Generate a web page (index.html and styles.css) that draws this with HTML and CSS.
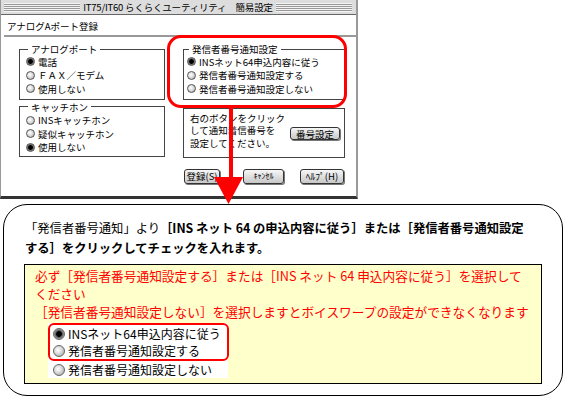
FILE: index.html
```html
<!DOCTYPE html>
<html lang="ja">
<head>
    <meta charset="UTF-8">
    <title>アナログAポート登録</title>
    <link rel="stylesheet" href="styles.css">
</head>
<body>
    <div class="page">
        <div class="window">
            <div class="titlebar">
                <span class="stripes"></span>
                <span class="title">IT75/IT60 らくらくユーティリティ　簡易設定</span>
                <span class="stripes"></span>
            </div>
            <div class="win-body">
                <div class="page-title">アナログAポート登録</div>
                <div class="columns">
                    <div class="col col-left">
                        <fieldset class="group">
                            <legend>アナログポート</legend>
                            <div class="opt"><span class="rb on"></span>電話</div>
                            <div class="opt"><span class="rb"></span>ＦＡＸ／モデム</div>
                            <div class="opt"><span class="rb"></span>使用しない</div>
                        </fieldset>
                        <fieldset class="group group-catch">
                            <legend>キャッチホン</legend>
                            <div class="opt"><span class="rb"></span>INSキャッチホン</div>
                            <div class="opt"><span class="rb"></span>疑似キャッチホン</div>
                            <div class="opt"><span class="rb on"></span>使用しない</div>
                        </fieldset>
                    </div>
                    <div class="col col-right">
                        <fieldset class="group group-notify">
                            <legend>発信者番号通知設定</legend>
                            <div class="opt"><span class="rb on"></span>INSネット64申込内容に従う</div>
                            <div class="opt"><span class="rb"></span>発信者番号通知設定する</div>
                            <div class="opt"><span class="rb"></span>発信者番号通知設定しない</div>
                        </fieldset>
                        <div class="number-box">
                            <p>右のボタンをクリック<br>して通知着信番号を<br>設定してください。</p>
                            <button class="btn btn-number">番号設定</button>
                        </div>
                    </div>
                </div>
                <div class="actions">
                    <button class="btn btn-save">登録(S)</button>
                    <button class="btn btn-cancel">ｷｬﾝｾﾙ</button>
                    <button class="btn btn-help">ﾍﾙﾌﾟ(H)</button>
                </div>
            </div>
        </div>

        <!-- annotation: red frame + arrow over the dialog -->
        <div class="highlight"></div>
        <svg class="arrow" width="40" height="100" viewBox="0 0 40 100">
            <rect x="19" y="0" width="4" height="72" fill="#ff0000"/>
            <polygon points="4,71 33,71 18.5,98" fill="#ff0000"/>
        </svg>

        <div class="callout">
            <p class="lead">「発信者番号通知」より<b>［INS ネット 64 の申込内容に従う］または［発信者番号通知設定<br>する］をクリックしてチェックを入れます。</b></p>
            <div class="note">
                <p class="warn">必ず［発信者番号通知設定する］または［INS ネット 64 申込内容に従う］を選択して<br>ください<br>［発信者番号通知設定しない］を選択しますとボイスワープの設定ができなくなります</p>
                <div class="choices">
                    <div class="marked">
                        <div class="choice"><span class="radio on"></span>INSネット64申込内容に従う</div>
                        <div class="choice"><span class="radio"></span>発信者番号通知設定する</div>
                    </div>
                    <div class="choice"><span class="radio"></span>発信者番号通知設定しない</div>
                </div>
            </div>
        </div>
    </div>
</body>
</html>
```

FILE: styles.css
```css
body {
    margin: 0;
    background: white;
    font-family: "Noto Sans CJK JP", sans-serif;
    color: #000;
}
.page {
    position: relative;
    width: 565px;
    height: 397px;
}
p {
    margin: 0;
}

/* dialog window */
.window {
    width: 358px;
    height: 199px;
    box-sizing: border-box;
    border-left: 1px solid #999;
    border-right: 2px solid #999;
    border-bottom: 3px solid #333;
    background: white;
    display: flex;
    flex-direction: column;
    font-size: 9.5px;
}
.titlebar {
    height: 15px;
    box-sizing: border-box;
    background: #ddd;
    border-bottom: 1px solid #666;
    display: flex;
    align-items: center;
    padding: 0 4px 0 3px;
    gap: 3px;
}
.stripes {
    flex: 1;
    height: 9px;
    background: repeating-linear-gradient(to bottom, #f4f4f4 0 1px, #999 1px 2px);
}
.title {
    font-size: 9.5px;
    line-height: 14px;
    letter-spacing: -0.2px;
}
.win-body {
    flex: 1;
    display: flex;
    flex-direction: column;
}
.page-title {
    margin-left: 3px;
    padding: 3px 0 0 3px;
    line-height: 17px;
    border-bottom: 2px solid #999;
}
.columns {
    display: flex;
    gap: 18px;
    margin: 6px 0 0 18px;
}
.col {
    display: flex;
    flex-direction: column;
}
.col-left {
    width: 146px;
    gap: 1px;
}
.col-right {
    width: 162px;
}
.group {
    margin: 0;
    min-width: 0;
    border: 1px solid #444;
    padding: 0 4px 3px 6px;
}
.group legend {
    padding: 0 3px;
    margin-left: 2px;
    line-height: 12px;
}
.group-catch {
    padding-top: 1px;
    padding-bottom: 2px;
}
.group-notify {
    padding-left: 3px;
}
.opt {
    display: flex;
    align-items: center;
    gap: 3px;
    height: 13.5px;
    white-space: nowrap;
}
.rb {
    width: 9px;
    height: 9px;
    box-sizing: border-box;
    border-radius: 50%;
    border: 1px solid #555;
    background: radial-gradient(circle at 40% 40%, #fff 0, #ddd 45%, #999 100%);
}
.rb.on {
    background: radial-gradient(circle, #000 0 2px, #555 2.5px, #aaa 4px);
}
.number-box {
    margin-top: 8px;
    height: 50px;
    box-sizing: border-box;
    border: 1px solid #444;
    display: flex;
    justify-content: space-between;
    align-items: flex-start;
    padding: 3px 4px 0 6px;
    line-height: 12.5px;
}
.btn {
    font-family: inherit;
    font-size: 9.5px;
    line-height: 12px;
    padding: 0;
    color: #000;
    border: 1px solid #333;
    border-radius: 3px;
    background: linear-gradient(#f6f6f6, #c8c8c8);
    box-shadow: 1px 1px 0 #777;
}
.btn-number {
    align-self: center;
    margin-top: -1px;
    width: 50px;
    height: 13px;
}
.actions {
    display: flex;
    justify-content: flex-end;
    margin-top: 11px;
    padding-right: 12px;
}
.actions .btn {
    height: 15px;
}
.btn-save {
    width: 36px;
    margin-right: 23px;
}
.btn-cancel {
    width: 41px;
    margin-right: 16px;
    font-size: 8px;
}
.btn-help {
    width: 44px;
}

/* red annotation */
.highlight {
    position: absolute;
    left: 167px;
    top: 35px;
    width: 180px;
    height: 73px;
    box-sizing: border-box;
    border: 3px solid #ff0000;
    border-radius: 14px;
}
.arrow {
    position: absolute;
    left: 210px;
    top: 106px;
}

/* explanation bubble */
.callout {
    margin: 5px 0 0 3px;
    width: 560px;
    height: 192px;
    box-sizing: border-box;
    border: 1px solid #000;
    border-radius: 24px;
    padding: 13px 21px 0 21px;
}
.lead {
    font-size: 12.3px;
    line-height: 20px;
    white-space: nowrap;
}
.note {
    margin: 6px 0 0 -1px;
    width: 518px;
    box-sizing: border-box;
    border: 1px solid #000;
    background: #ffffcc;
    padding: 2px 10px 5px 10px;
}
.warn {
    color: #ff0000;
    font-size: 12.7px;
    line-height: 18px;
    white-space: nowrap;
}
.choices {
    margin: 2px 0 0 13px;
    width: 180px;
    background: white;
    font-size: 12px;
}
.marked {
    border: 2px solid #ff0000;
    border-radius: 6px;
    margin-right: -1px;
}
.choice {
    display: flex;
    align-items: center;
    gap: 3px;
    height: 17px;
    padding-left: 5px;
    white-space: nowrap;
}
.marked .choice {
    padding-left: 3px;
}
.radio {
    width: 12px;
    height: 12px;
    box-sizing: border-box;
    border-radius: 50%;
    border: 1px solid #666;
    background: radial-gradient(circle at 40% 40%, #fff 0, #ddd 40%, #999 100%);
}
.radio.on {
    background: radial-gradient(circle, #000 0 2.5px, #444 3px, #777 4px, #bbb 6px);
}
```
